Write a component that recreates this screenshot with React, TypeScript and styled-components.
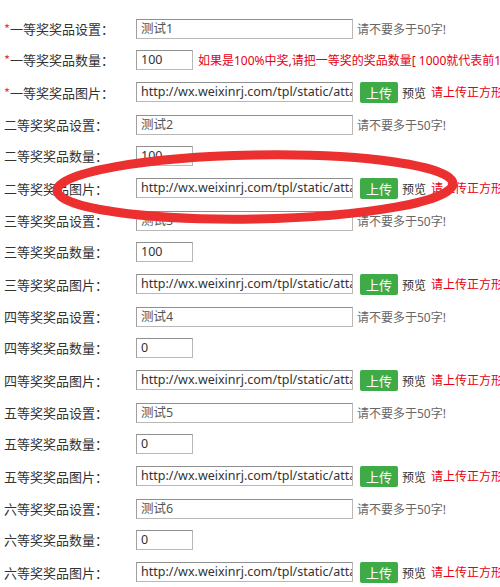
import React from "react";
import styled, { createGlobalStyle } from "styled-components";

const Global = createGlobalStyle`
  html, body { margin: 0; padding: 0; background: #fff; overflow: hidden; }
  body { font-family: "Noto Sans CJK SC", "Noto Sans", sans-serif; font-size: 13px; color: #333; }
`;

const Page = styled.div`
  position: relative;
  width: 500px;
  height: 587px;
  overflow: hidden;
  padding-top: 13px;
  box-sizing: border-box;
`;

const Row = styled.div<{ $h: number }>`
  display: flex;
  align-items: center;
  height: ${(p) => p.$h}px;
  padding-left: 4px;
  white-space: nowrap;
  overflow: hidden;
`;

const Label = styled.div`
  width: 132px;
  flex: none;
  font-size: 13px;
  color: #333;
`;

const Star = styled.span`
  color: #e4393c;
`;

const Input = styled.div<{ $w: number; $muted?: boolean }>`
  width: ${(p) => p.$w}px;
  height: 20px;
  box-sizing: border-box;
  flex: none;
  border: 1px solid #b8b8b8;
  border-top-color: #8f8f8f;
  border-left-color: #a0a0a0;
  padding: 0 4px;
  font-family: "Noto Sans", "Noto Sans CJK SC", sans-serif;
  font-size: 12.5px;
  line-height: 18px;
  color: ${(p) => (p.$muted ? "#555" : "#333")};
  overflow: hidden;
  white-space: nowrap;
`;

const Hint = styled.span<{ $red?: boolean }>`
  margin-left: ${(p) => (p.$red ? 5 : 4)}px;
  font-family: "Noto Sans", "Noto Sans CJK SC", sans-serif;
  font-size: 12px;
  color: ${(p) => (p.$red ? "#e60012" : "#666")};
`;

const Upload = styled.button`
  margin-left: 7px;
  width: 38px;
  height: 21px;
  padding: 0;
  border: none;
  border-radius: 2px;
  background: #3fab46;
  color: #fff;
  font-family: "Noto Sans CJK SC", sans-serif;
  font-size: 13px;
  line-height: 21px;
  flex: none;
`;

const Preview = styled.span`
  margin-left: 4px;
  font-size: 12px;
  color: #333;
`;

const Overlay = styled.svg`
  position: absolute;
  left: 0;
  top: 0;
  pointer-events: none;
`;

const groups = [
  { name: "一等", star: true, val: "测试1", count: "100" },
  { name: "二等", star: false, val: "测试2", count: "100" },
  { name: "三等", star: false, val: "测试3", count: "100" },
  { name: "四等", star: false, val: "测试4", count: "0" },
  { name: "五等", star: false, val: "测试5", count: "0" },
  { name: "六等", star: false, val: "测试6", count: "0" },
];

const url = "http://wx.weixinrj.com/tpl/static/atta";

export default function App() {
  return (
    <>
      <Global />
      <Page>
        {groups.map((g, i) => (
          <React.Fragment key={g.name}>
            <Row $h={31}>
              <Label>
                {g.star && <Star>*</Star>}
                {g.name}奖奖品设置：
              </Label>
              <Input $w={217} $muted>
                {g.val}
              </Input>
              <Hint>请不要多于50字!</Hint>
            </Row>
            <Row $h={31}>
              <Label>
                {g.star && <Star>*</Star>}
                {g.name}奖奖品数量：
              </Label>
              <Input $w={57}>{g.count}</Input>
              {i === 0 && (
                <Hint $red>如果是100%中奖,请把一等奖的奖品数量[ 1000就代表前1</Hint>
              )}
            </Row>
            <Row $h={34}>
              <Label>
                {g.star && <Star>*</Star>}
                {g.name}奖奖品图片：
              </Label>
              <Input $w={217}>{url}</Input>
              <Upload>上传</Upload>
              <Preview>预览</Preview>
              <Hint $red>请上传正方形</Hint>
            </Row>
          </React.Fragment>
        ))}
        <Overlay width={500} height={587} viewBox="0 0 500 587">
          <ellipse
            cx={255}
            cy={187}
            rx={198}
            ry={32}
            fill="none"
            stroke="#ec2f2f"
            strokeWidth={9}
            transform="rotate(-1 255 187)"
          />
        </Overlay>
      </Page>
    </>
  );
}
